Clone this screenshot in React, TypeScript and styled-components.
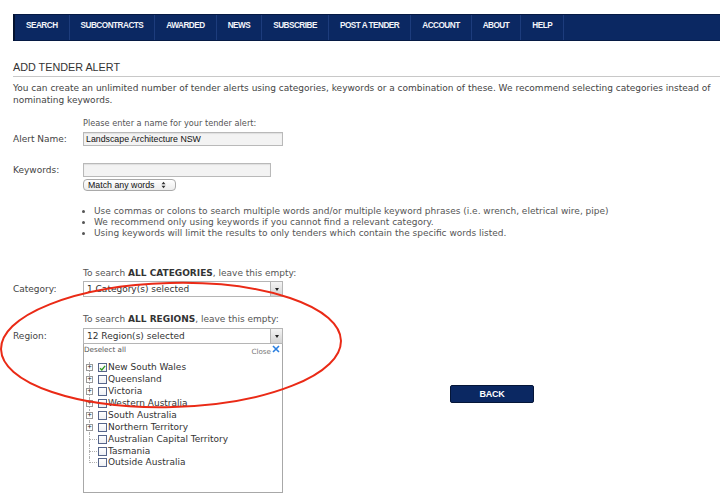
import React from 'react';
import styled, { createGlobalStyle } from 'styled-components';

const GlobalStyle = createGlobalStyle`
  html, body {
    margin: 0;
    background: #ffffff;
  }
  body {
    font-family: "DejaVu Sans", Verdana, sans-serif;
    color: #444444;
  }
`;

const navItems = ['SEARCH', 'SUBCONTRACTS', 'AWARDED', 'NEWS', 'SUBSCRIBE', 'POST A TENDER', 'ACCOUNT', 'ABOUT', 'HELP'];

const regions = [
  { name: 'New South Wales', checked: true, expandable: true },
  { name: 'Queensland', checked: false, expandable: true },
  { name: 'Victoria', checked: false, expandable: true },
  { name: 'Western Australia', checked: false, expandable: true },
  { name: 'South Australia', checked: false, expandable: true },
  { name: 'Northern Territory', checked: false, expandable: true },
  { name: 'Australian Capital Territory', checked: false, expandable: false },
  { name: 'Tasmania', checked: false, expandable: false },
  { name: 'Outside Australia', checked: false, expandable: false },
];

const App = () => {
  return (
    <Page>
      <GlobalStyle />
      <Nav>
        {navItems.map((item) => (
          <NavItem key={item}>{item}</NavItem>
        ))}
      </Nav>

      <Heading>ADD TENDER ALERT</Heading>
      <Intro>
        You can create an unlimited number of tender alerts using categories, keywords or a combination of these. We recommend selecting categories instead of nominating keywords.
      </Intro>

      <FieldRow $mt={11}>
        <span />
        <Hint $small>Please enter a name for your tender alert:</Hint>
      </FieldRow>
      <FieldRow $mt={3}>
        <Label>Alert Name:</Label>
        <TextInput $width={200}>Landscape Architecture NSW</TextInput>
      </FieldRow>
      <FieldRow $mt={17}>
        <Label>Keywords:</Label>
        <TextInput $width={188} />
      </FieldRow>
      <FieldRow $mt={2}>
        <span />
        <MatchSelect>
          Match any words
          <SelectArrows>
            <svg width="5" height="8" viewBox="0 0 5 8">
              <path d="M0.5 3.2 L2.5 0.8 L4.5 3.2 Z M0.5 4.8 L2.5 7.2 L4.5 4.8 Z" fill="#333" />
            </svg>
          </SelectArrows>
        </MatchSelect>
      </FieldRow>
      <FieldRow $mt={15}>
        <span />
        <Bullets>
          <li>Use commas or colons to search multiple words and/or multiple keyword phrases (i.e. wrench, eletrical wire, pipe)</li>
          <li>We recommend only using keywords if you cannot find a relevant category.</li>
          <li>Using keywords will limit the results to only tenders which contain the specific words listed.</li>
        </Bullets>
      </FieldRow>

      <FieldRow $mt={28}>
        <span />
        <Hint>To search <b>ALL CATEGORIES</b>, leave this empty:</Hint>
      </FieldRow>
      <FieldRow $mt={2}>
        <Label>Category:</Label>
        <Combo>
          <ComboText>1 Category(s) selected</ComboText>
          <ComboButton>
            <Caret />
          </ComboButton>
        </Combo>
      </FieldRow>

      <FieldRow $mt={16}>
        <span />
        <Hint>To search <b>ALL REGIONS</b>, leave this empty:</Hint>
      </FieldRow>
      <FieldRow $mt={3}>
        <Label>Region:</Label>
        <ComboHolder>
          <Combo>
            <ComboText>12 Region(s) selected</ComboText>
            <ComboButton>
              <Caret />
            </ComboButton>
          </Combo>
          <DropPanel>
            <PanelTop>
              <SmallLink>Deselect all</SmallLink>
              <CloseLink>
                Close
                <svg width="8" height="8" viewBox="0 0 8 8">
                  <path d="M1 1 L7 7 M7 1 L1 7" stroke="#2a7fe0" strokeWidth="1.6" />
                </svg>
              </CloseLink>
            </PanelTop>
            <Tree>
              {regions.map((r, i) => (
                <TreeRow key={r.name} $last={i === regions.length - 1}>
                  {r.expandable ? <Expander>+</Expander> : <Connector />}
                  <CheckBox>
                    {r.checked && (
                      <svg width="8" height="8" viewBox="0 0 8 8">
                        <path d="M1.2 4.2 L3.2 6.2 L7 1.6" stroke="#2e9a1f" strokeWidth="1.5" fill="none" />
                      </svg>
                    )}
                  </CheckBox>
                  <TreeLabel>{r.name}</TreeLabel>
                </TreeRow>
              ))}
            </Tree>
          </DropPanel>
        </ComboHolder>
      </FieldRow>

      <ButtonRow>
        <BackButton>BACK</BackButton>
      </ButtonRow>

      <Annotation width="720" height="503" viewBox="0 0 720 503">
        <ellipse cx="171" cy="345" rx="170" ry="62" fill="none" stroke="#ea2a16" strokeWidth="2" transform="rotate(-1.5 171 345)" />
      </Annotation>
    </Page>
  );
};

const Page = styled.div`
  position: relative;
  width: 720px;
  height: 503px;
  overflow: hidden;
  padding: 14px 0 0 13px;
  box-sizing: border-box;
`;

const Nav = styled.div`
  display: flex;
  height: 27px;
  box-sizing: border-box;
  background-color: #0b2862;
  border: 1px solid #061a44;
  border-left: 2px solid #03122f;
  border-right: none;
`;

const NavItem = styled.div`
  padding: 0 11px;
  line-height: 22px;
  font-family: "Liberation Sans", Arial, sans-serif;
  font-size: 8.2px;
  font-weight: bold;
  letter-spacing: -0.5px;
  color: #f2f4fa;
  border-right: 1px solid #1d3c7c;
`;

const Heading = styled.div`
  margin-top: 19px;
  padding-bottom: 2px;
  font-family: "Liberation Sans", Arial, sans-serif;
  font-size: 10.8px;
  line-height: 14px;
  color: #333333;
  border-bottom: 1px solid #c8c8c8;
`;

const Intro = styled.div`
  margin-top: 5px;
  padding-right: 4px;
  font-size: 9px;
  line-height: 12px;
  color: #444444;
`;

const FieldRow = styled.div<{ $mt: number }>`
  display: grid;
  grid-template-columns: 70px auto;
  align-items: center;
  margin-top: ${(p) => p.$mt}px;
`;

const Label = styled.div`
  font-size: 9px;
  line-height: 12px;
  color: #444444;
`;

const Hint = styled.div<{ $small?: boolean }>`
  font-size: ${(p) => (p.$small ? '8.2px' : '9px')};
  line-height: 12px;
  color: #555555;

  b {
    color: #333333;
  }
`;

const TextInput = styled.div<{ $width: number }>`
  width: ${(p) => p.$width}px;
  height: 14px;
  box-sizing: border-box;
  padding: 0 2px;
  background-color: #f3f3f3;
  border: 1px solid #b9b9b9;
  box-shadow: inset 0 1px 1px rgba(0, 0, 0, 0.08);
  font-family: "Liberation Sans", Arial, sans-serif;
  font-size: 8.8px;
  line-height: 12px;
  color: #111111;
`;

const MatchSelect = styled.div`
  position: relative;
  width: 93px;
  height: 12px;
  box-sizing: border-box;
  padding-left: 4px;
  border: 1px solid #a9a9a9;
  border-radius: 4px;
  background: linear-gradient(#ffffff, #ececec);
  font-family: "Liberation Sans", Arial, sans-serif;
  font-size: 8.8px;
  line-height: 10px;
  color: #111111;
`;

const SelectArrows = styled.span`
  position: absolute;
  right: 9px;
  top: 1px;
  display: flex;
`;

const Bullets = styled.ul`
  margin: 0;
  padding-left: 11px;
  font-size: 9px;
  line-height: 11px;
  color: #555555;
`;

const Combo = styled.div`
  display: flex;
  width: 200px;
  height: 16px;
  box-sizing: border-box;
  border: 1px solid #b5b5b5;
  background-color: #ffffff;
`;

const ComboText = styled.div`
  flex: 1;
  padding-left: 3px;
  font-size: 9px;
  line-height: 14px;
  color: #333333;
`;

const ComboButton = styled.div`
  width: 11px;
  display: flex;
  align-items: center;
  justify-content: center;
  background: linear-gradient(#f4f4f4, #d4d4d4);
  border-left: 1px solid #b5b5b5;
`;

const Caret = styled.span`
  width: 0;
  height: 0;
  border-left: 2.5px solid transparent;
  border-right: 2.5px solid transparent;
  border-top: 3px solid #222222;
`;

const ComboHolder = styled.div`
  position: relative;
  width: 200px;
`;

const DropPanel = styled.div`
  position: absolute;
  top: 100%;
  left: 0;
  width: 200px;
  height: 149px;
  box-sizing: border-box;
  border: 1px solid #a8a8a8;
  border-top: none;
  background-color: #ffffff;
  z-index: 2;
`;

const PanelTop = styled.div`
  display: flex;
  justify-content: space-between;
  align-items: flex-start;
  padding: 1px 2px 0 0;
  height: 16px;
`;

const SmallLink = styled.span`
  font-size: 7.2px;
  line-height: 9px;
  color: #555555;
`;

const CloseLink = styled.span`
  display: flex;
  align-items: flex-start;
  gap: 1px;
  margin-top: 2px;
  font-size: 7.2px;
  line-height: 10px;
  color: #777777;

  svg {
    margin-top: -2px;
  }
`;

const Tree = styled.div`
  padding: 1px 0 0 2px;
`;

const TreeRow = styled.div<{ $last: boolean }>`
  position: relative;
  display: flex;
  align-items: center;
  height: 11.875px;

  &::before {
    content: '';
    position: absolute;
    left: 3px;
    top: 0;
    height: ${(p) => (p.$last ? '6px' : '100%')};
    border-left: 1px dotted #b0b0b0;
  }
`;

const Expander = styled.span`
  position: relative;
  z-index: 1;
  width: 7px;
  height: 7px;
  box-sizing: border-box;
  border: 1px solid #9a9a9a;
  background-color: #ffffff;
  font-family: "DejaVu Sans Mono", monospace;
  font-size: 7px;
  line-height: 5px;
  text-align: center;
  color: #222222;
  margin-right: 5px;
`;

const Connector = styled.span`
  width: 8px;
  margin-left: 3px;
  margin-right: 1px;
  border-top: 1px dotted #b0b0b0;
`;

const CheckBox = styled.span`
  width: 9px;
  height: 9px;
  box-sizing: border-box;
  border: 1px solid #56658a;
  background: linear-gradient(#ffffff, #eef0f4);
  display: flex;
  align-items: center;
  justify-content: center;
  margin-right: 1px;
`;

const TreeLabel = styled.span`
  font-size: 9px;
  line-height: 11px;
  color: #333333;
`;

const ButtonRow = styled.div`
  margin-top: 41px;
  padding-left: 437px;
`;

const BackButton = styled.div`
  width: 84px;
  height: 18px;
  box-sizing: border-box;
  background-color: #0b2862;
  border: 1px solid #051638;
  border-radius: 2px;
  font-family: "Liberation Sans", Arial, sans-serif;
  font-size: 9px;
  font-weight: bold;
  letter-spacing: -0.3px;
  line-height: 16px;
  text-align: center;
  color: #ffffff;
`;

const Annotation = styled.svg`
  position: absolute;
  left: 0;
  top: 0;
  pointer-events: none;
  z-index: 5;
`;

export default App;
